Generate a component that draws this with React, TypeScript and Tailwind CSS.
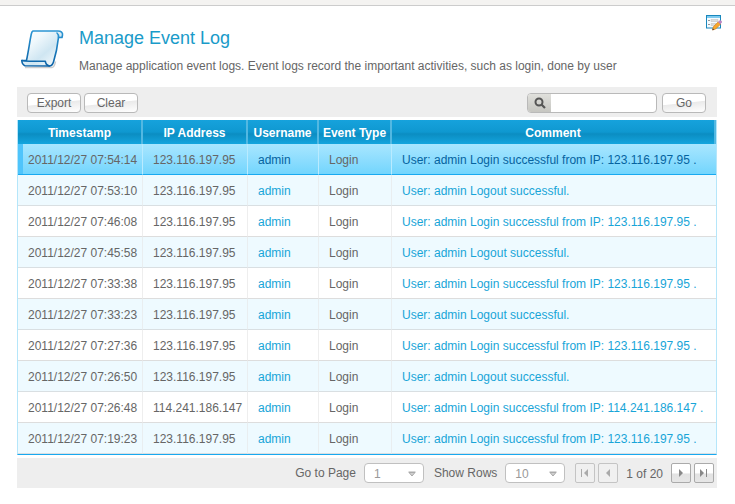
import React, { useState } from 'react';

type Row = { time: string; ip: string; action: 'Login' | 'Logout' };

const rows: Row[] = [
  { time: '2011/12/27 07:54:14', ip: '123.116.197.95', action: 'Login' },
  { time: '2011/12/27 07:53:10', ip: '123.116.197.95', action: 'Logout' },
  { time: '2011/12/27 07:46:08', ip: '123.116.197.95', action: 'Login' },
  { time: '2011/12/27 07:45:58', ip: '123.116.197.95', action: 'Logout' },
  { time: '2011/12/27 07:33:38', ip: '123.116.197.95', action: 'Login' },
  { time: '2011/12/27 07:33:23', ip: '123.116.197.95', action: 'Logout' },
  { time: '2011/12/27 07:27:36', ip: '123.116.197.95', action: 'Login' },
  { time: '2011/12/27 07:26:50', ip: '123.116.197.95', action: 'Logout' },
  { time: '2011/12/27 07:26:48', ip: '114.241.186.147', action: 'Login' },
  { time: '2011/12/27 07:19:23', ip: '123.116.197.95', action: 'Login' },
];

const headings = ['Timestamp', 'IP Address', 'Username', 'Event Type', 'Comment'];

function ScrollIcon() {
  return (
    <svg className="h-10 w-11 shrink-0" viewBox="0 0 44 40" aria-hidden="true">
      <defs>
        <linearGradient id="paper" x1="0" y1="0" x2="1" y2="1">
          <stop offset="0" stopColor="#ffffff" />
          <stop offset="0.3" stopColor="#f0f8fc" />
          <stop offset="0.6" stopColor="#cfe6f2" />
          <stop offset="1" stopColor="#ffffff" />
        </linearGradient>
        <linearGradient id="edge" x1="0" y1="0" x2="0" y2="1">
          <stop offset="0" stopColor="#2b95d3" />
          <stop offset="1" stopColor="#0c62a6" />
        </linearGradient>
      </defs>
      <path d="M5 37.500h27c2.500-.5 3-3 3.500-6" fill="none" stroke="#cccccc" strokeWidth="1.500" />
      <g stroke="url(#edge)" strokeWidth="1.600" strokeLinejoin="round" strokeLinecap="round">
        <path
          d="M13 1H38c3 0 5 1.500 4.500 4L42 7.500 38.500 7.300C37.500 16 36 24 33.500 32 32.500 35 31.500 36 29.500 36L5 35.800C3 35 2 33 1.800 30.500L6.500 30.300C8.500 21 9.800 11 11.300 4 11.600 2.500 12 1.500 13 1Z"
          fill="url(#paper)"
        />
        <path d="M38.500 7.300c.2-2.500-.3-3.300-1.500-4.300M1.800 30.500c3 1 7 .8 11 .7h12.500c.2 2 1.500 4.200 4 4.800" fill="none" />
      </g>
    </svg>
  );
}

function EditFormIcon() {
  return (
    <svg className="h-4 w-4" viewBox="0 0 16 16" aria-hidden="true">
      <rect x="0.500" y="0.500" width="14" height="12.500" fill="#f5fbff" stroke="#1987bd" />
      <path d="M1 1h13v2H1z" fill="#7ecbf0" />
      <path d="M2 5.500h2M2 9.500h2" stroke="#999999" />
      <path d="M5 4.500h7v2H5zM5 8.500h5v2H5z" fill="#dddddd" stroke="#bcbcbc" strokeWidth="0.500" />
      <path d="M6.500 15l.8-3.200 5-5 2.300 2.300-5 5z" fill="#f9a82c" stroke="#c87416" strokeWidth="0.600" />
      <path d="M12 7l1.500-1.600c1.300-.8 3 .8 2.300 2.200l-1.400 1.700z" fill="#bd86c2" />
      <path d="M6.300 15.200l.5-1.900 1.400 1.400z" fill="#444444" />
    </svg>
  );
}

function PushButton({ children, wide = false }: { children: React.ReactNode; wide?: boolean }) {
  return (
    <button
      type="button"
      className={`h-5 rounded border border-[#b9b9b9] bg-[linear-gradient(174deg,#ffffff_48%,#eaeaea_52%,#ffffff)] leading-[18px] text-[#666666] ${
        wide ? 'w-[54px]' : 'w-11'
      }`}
      style={undefined}
    >
      {children}
    </button>
  );
}

function PageSelect({ id, label, options }: { id: string; label: string; options: string[] }) {
  const [value, setValue] = useState(options[0]);
  return (
    <div className="flex items-center gap-2">
      <label htmlFor={id}>{label}</label>
      <div className="relative">
        <select
          id={id}
          value={value}
          onChange={(e) => setValue(e.target.value)}
          className="block h-5 w-[60px] appearance-none rounded border border-[#c0c0c0] bg-white pt-[2px] pl-[9px] leading-4 text-[#999999]"
        >
          {options.map((o) => (
            <option key={o}>{o}</option>
          ))}
        </select>
        <svg className="pointer-events-none absolute top-[8px] right-2 h-[6px] w-2" viewBox="0 0 8 6" aria-hidden="true">
          <path d="M.5 1h7M1 1.500l3 3.500 3-3.500z" fill="#d0d0d0" stroke="#aaaaaa" />
        </svg>
      </div>
    </div>
  );
}

type Step = 'first' | 'previous' | 'next' | 'last';

function StepButton({ step }: { step: Step }) {
  const disabled = step === 'first' || step === 'previous';
  const shapes: Record<Step, string> = {
    first: 'M0 0h1v8H0zM7 0v8L3 4z',
    previous: 'M6 0v8L2 4z',
    next: 'M2 0v8l4-4z',
    last: 'M0 0v8l4-4zM6 0h1v8H6z',
  };
  return (
    <button
      type="button"
      aria-label={`Go to ${step} page`}
      disabled={disabled}
      className={`flex h-5 w-5 items-center justify-center rounded-[2px] border ${
        disabled ? 'border-[#c4c4c4] bg-[#f0f0f0] text-[#aaaaaa]' : 'border-[#aaaaaa] bg-[linear-gradient(#ffffff_50%,#e2e2e2_55%,#e6e6e6)] text-[#888888]'
      }`}
    >
      <svg className="h-2 w-2" viewBox="0 0 8 8" aria-hidden="true">
        <path d={shapes[step]} fill="currentColor" />
      </svg>
    </button>
  );
}

export default function App() {
  return (
    <div className="bg-white font-['Liberation_Sans',Arial,sans-serif] text-[12px] leading-4 text-[#666666]">
      <div className="h-[6px] border-b border-[#cccccc] bg-[#f4f3f1]" />
      <main className="pr-[18px] pl-[17px]">
        <header className="flex h-[81px] items-start justify-between">
          <div className="flex gap-[15px] pt-[22px] pl-[3px]">
            <div className="pt-[2px]">
              <ScrollIcon />
            </div>
            <div>
              <h1 className="text-[18px] leading-5 text-[#1a9bc9]">Manage Event Log</h1>
              <p className="mt-[10px] whitespace-nowrap">
                Manage application event logs. Event logs record the important activities, such as login, done by user
              </p>
            </div>
          </div>
          <button type="button" aria-label="Edit view" className="-mr-[5px] mt-[9px]">
            <EditFormIcon />
          </button>
        </header>

        <div className="flex h-[30px] items-center justify-between bg-[#eeeeee] pt-[2px] pr-[11px] pl-[10px]">
          <div className="flex gap-[3px]">
            <PushButton wide>Export</PushButton>
            <PushButton wide>Clear</PushButton>
          </div>
          <form className="flex gap-[5px]" onSubmit={(e) => e.preventDefault()}>
            <label className="flex h-5 w-[130px] overflow-hidden rounded border border-[#b9b9b9] bg-white">
              <span className="flex w-[23px] shrink-0 items-center justify-center bg-linear-to-b from-[#e0e0dc] to-[#c6c6c1]">
                <svg className="h-3 w-3" viewBox="0 0 12 12" fill="none" stroke="#555555" aria-hidden="true">
                  <circle cx="5" cy="5" r="3.500" strokeWidth="2" />
                  <path d="M7.500 7.500l3.500 3.500" strokeWidth="2.200" />
                </svg>
              </span>
              <input type="search" aria-label="Search" className="w-full min-w-0 px-1 outline-none" />
            </label>
            <PushButton>Go</PushButton>
          </form>
        </div>

        <table className="mt-[3px] w-full table-fixed border-separate border-spacing-0 border-x border-b border-x-[#b5e6fa] border-b-[#18a9f0]">
          <colgroup>
            <col className="w-[125px]" />
            <col className="w-[105px]" />
            <col className="w-[71px]" />
            <col className="w-[73px]" />
            <col />
          </colgroup>
          <thead>
            <tr>
              {headings.map((h) => (
                <th
                  key={h}
                  scope="col"
                  className="h-6 border-r-2 border-[#52b8e2] bg-[linear-gradient(#16a2dc,#0f98d0_50%,#0b8dc2_58%,#14a5de)] p-0 pt-px font-bold whitespace-nowrap text-white"
                >
                  {h}
                </th>
              ))}
            </tr>
          </thead>
          <tbody>
            {rows.map((row, i) => {
              const selected = i === 0;
              const tone = selected
                ? 'bg-linear-to-b from-[#a8e6ff] to-[#72d5fd] border-b-[#18a9f0] border-r-[#b9ebff]'
                : i % 2
                  ? 'bg-[#eefaff] border-b-[#d9dfe2] border-r-[#e9eef0]'
                  : 'bg-white border-b-[#dddddd] border-r-[#eeeeee]';
              const cell = `h-[31px] border-b border-r p-0 whitespace-nowrap ${tone}`;
              const link = selected ? 'text-[#0563a0]' : 'text-[#18a5d8]';
              return (
                <tr key={row.time}>
                  <td className={cell}>
                    <div className={`flex h-[30px] items-center pt-[2px] ${selected ? 'border-l-[5px] border-[#4fc4fb] pl-[5px]' : 'pl-[10px]'}`}>
                      {row.time}
                    </div>
                  </td>
                  <td className={cell}>
                    <div className="pt-[2px] pl-[10px]">{row.ip}</div>
                  </td>
                  <td className={cell}>
                    <a href="#user" className={`block pt-[2px] pl-[10px] ${link}`}>
                      admin
                    </a>
                  </td>
                  <td className={cell}>
                    <div className="pt-[2px] pl-[10px]">Login</div>
                  </td>
                  <td className={`${cell} border-r-0`}>
                    <a href="#event" className={`block pt-[2px] pl-[10px] ${link}`}>
                      {row.action === 'Login' ? `User: admin Login successful from IP: ${row.ip} .` : 'User: admin Logout successful.'}
                    </a>
                  </td>
                </tr>
              );
            })}
          </tbody>
        </table>

        <footer className="mt-[3px] flex h-[30px] items-center justify-end bg-[#eeeeee] pr-[3px]">
          <div className="flex items-center gap-[10px]">
            <PageSelect id="page" label="Go to Page" options={['1', '2', '3', '4', '5']} />
            <PageSelect id="rows" label="Show Rows" options={['10', '20', '50']} />
          </div>
          <nav aria-label="Pages" className="ml-[10px] flex items-center gap-[3px]">
            <StepButton step="first" />
            <StepButton step="previous" />
            <span className="px-[5px] pt-[2px]">1 of 20</span>
            <StepButton step="next" />
            <StepButton step="last" />
          </nav>
        </footer>
      </main>
    </div>
  );
}
